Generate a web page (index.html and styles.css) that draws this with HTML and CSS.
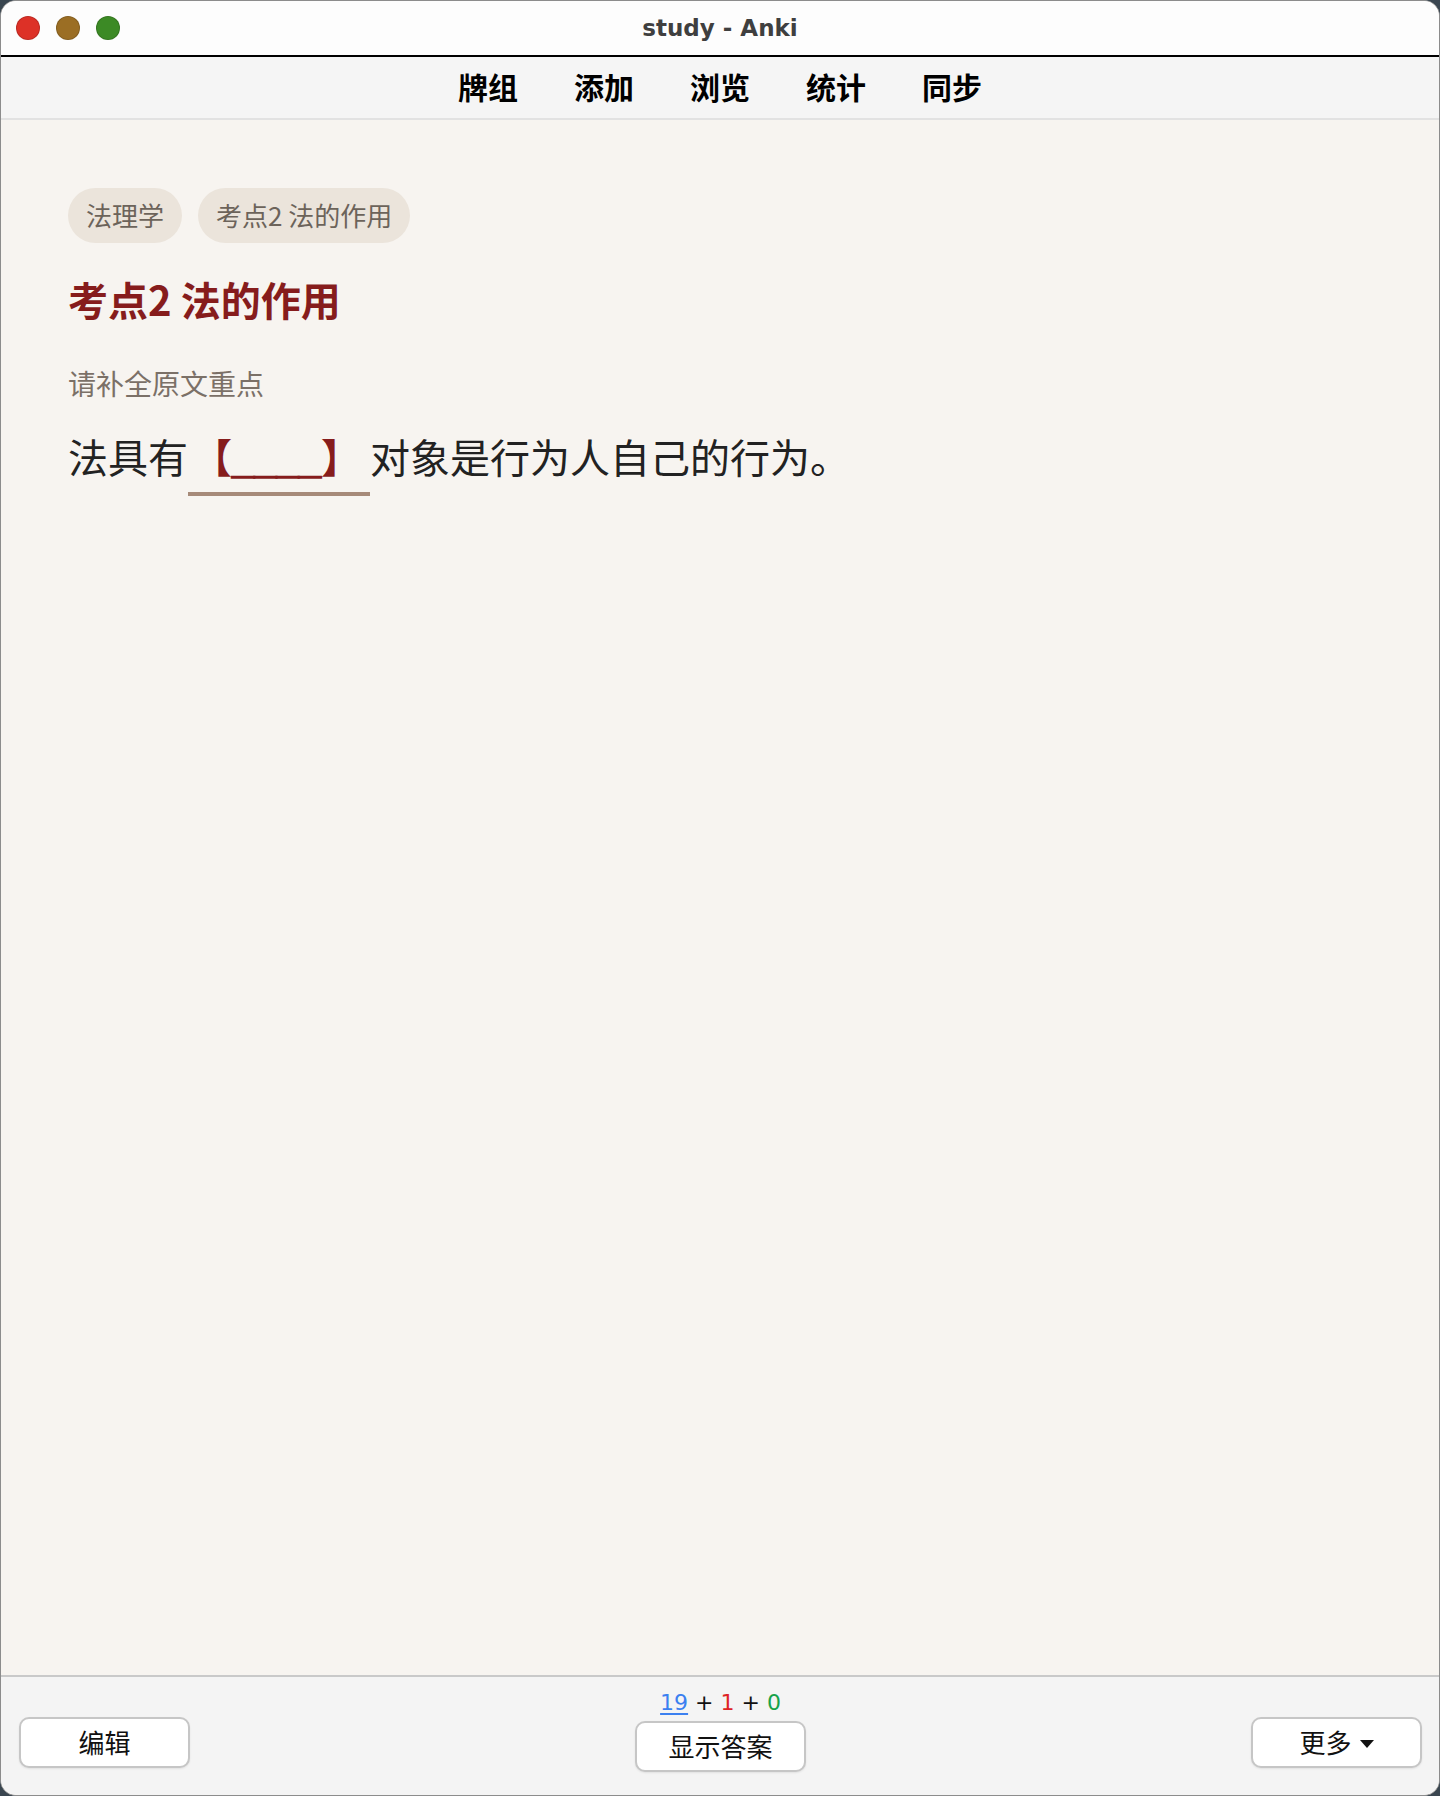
FILE: index.html
```html
<!DOCTYPE html>
<html lang="zh-CN">
<head>
<meta charset="utf-8">
<title>study - Anki</title>
<link rel="stylesheet" href="styles.css">
</head>
<body>
<div class="window">
  <header class="titlebar">
    <div class="lights">
      <span class="light red"></span>
      <span class="light yellow"></span>
      <span class="light green"></span>
    </div>
    <div class="title">study - Anki</div>
    <div></div>
  </header>
  <nav class="toolbar">
    <a class="tb-item">牌组</a>
    <a class="tb-item">添加</a>
    <a class="tb-item">浏览</a>
    <a class="tb-item">统计</a>
    <a class="tb-item">同步</a>
  </nav>
  <main class="card">
    <div class="tags">
      <span class="tag">法理学</span>
      <span class="tag">考点2 法的作用</span>
    </div>
    <h1 class="heading">考点2 法的作用</h1>
    <div class="hint">请补全原文重点</div>
    <div class="sentence">法具有<span class="cloze">【<span class="blank">____</span>】</span>对象是行为人自己的行为。</div>
  </main>
  <footer class="bottombar">
    <div class="side left"><button class="btn">编辑</button></div>
    <div class="center">
      <div class="counts"><span class="c-new">19</span> + <span class="c-learn">1</span> + <span class="c-review">0</span></div>
      <button class="btn">显示答案</button>
    </div>
    <div class="side right"><button class="btn more">更多<span class="caret"></span></button></div>
  </footer>
</div>
</body>
</html>
```
FILE: styles.css
```css
html, body {
  margin: 0;
  padding: 0;
}
body {
  background: #3a4650;
  font-family: "Noto Sans CJK SC", "Noto Sans", sans-serif;
}
.window {
  width: 1440px;
  height: 1796px;
  box-sizing: border-box;
  border: 1px solid #8c8c8c;
  border-radius: 16px;
  overflow: hidden;
  display: flex;
  flex-direction: column;
  background: #f7f4f0;
}
.titlebar {
  height: 54px;
  flex: none;
  background: #fdfdfd;
  border-bottom: 2px solid #000;
  display: grid;
  grid-template-columns: 1fr auto 1fr;
  align-items: center;
}
.lights {
  display: flex;
  gap: 16px;
  padding-left: 15px;
}
.light {
  width: 22px;
  height: 22px;
  border-radius: 50%;
  border: 1px solid rgba(0,0,0,0.15);
}
.light.red { background: #dd3127; }
.light.yellow { background: #9b6e24; }
.light.green { background: #3c8a25; }
.title {
  font-family: "DejaVu Sans", sans-serif;
  font-weight: bold;
  font-size: 23px;
  color: #3f3f3f;
  padding-bottom: 1px;
}
.toolbar {
  height: 63px;
  flex: none;
  box-sizing: border-box;
  background: #f5f5f5;
  border-bottom: 2px solid #e2e2e2;
  display: flex;
  justify-content: center;
  align-items: center;
  gap: 56px;
  padding-bottom: 3px;
}
.tb-item {
  font-size: 30px;
  font-weight: bold;
  color: #000;
  line-height: 40px;
}
.card {
  flex: 1;
  padding: 68px 67px 0;
  background: #f7f4f0;
}
.tags {
  display: flex;
  gap: 16px;
}
.tag {
  background: #ebe4db;
  color: #6c635a;
  font-size: 26px;
  line-height: 39px;
  padding: 7px 18px 9px;
  border-radius: 28px;
}
.heading {
  margin: 30px 0 0;
  font-size: 40px;
  line-height: 52px;
  font-weight: bold;
  color: #861c1c;
}
.hint {
  margin-top: 38px;
  font-size: 28px;
  line-height: 40px;
  color: #7b7067;
}
.sentence {
  margin-top: 25px;
  font-size: 40px;
  line-height: 56px;
  color: #222;
}
.cloze {
  font-family: "Liberation Sans", "Noto Sans CJK SC", sans-serif;
  font-weight: bold;
  color: #861c1c;
  padding: 0 9px 11px 4px;
  border-bottom: 4px solid #a68a79;
}
.blank {
  -webkit-text-stroke: 1.6px #861c1c;
}
.bottombar {
  height: 118px;
  flex: none;
  background: #f4f4f4;
  border-top: 2px solid #c9c9c9;
  display: grid;
  grid-template-columns: 1fr auto 1fr;
  padding: 0 17px 0 18px;
}
.side { padding-top: 40px; }
.side.right { display: flex; justify-content: flex-end; }
.center {
  display: flex;
  flex-direction: column;
  align-items: center;
  padding-top: 12px;
}
.counts {
  font-family: "DejaVu Sans", sans-serif;
  font-size: 22px;
  line-height: 28px;
  color: #111;
  margin-bottom: 4px;
}
.c-new { color: #3b80f0; text-decoration: underline; text-underline-offset: 3px; }
.c-learn { color: #de2424; }
.c-review { color: #17a24a; }
.btn {
  width: 171px;
  height: 51px;
  box-sizing: border-box;
  background: #fff;
  border: 2px solid #c6c6c6;
  border-radius: 10px;
  box-shadow: 0 1px 2px rgba(0,0,0,0.08);
  font-family: "Noto Sans CJK SC", sans-serif;
  font-size: 26px;
  color: #111;
  display: flex;
  align-items: center;
  justify-content: center;
  padding: 0 0 2px;
}
.more { gap: 8px; }
.caret {
  width: 0;
  height: 0;
  border-left: 7px solid transparent;
  border-right: 7px solid transparent;
  border-top: 8px solid #111;
  margin-top: 4px;
}
```
